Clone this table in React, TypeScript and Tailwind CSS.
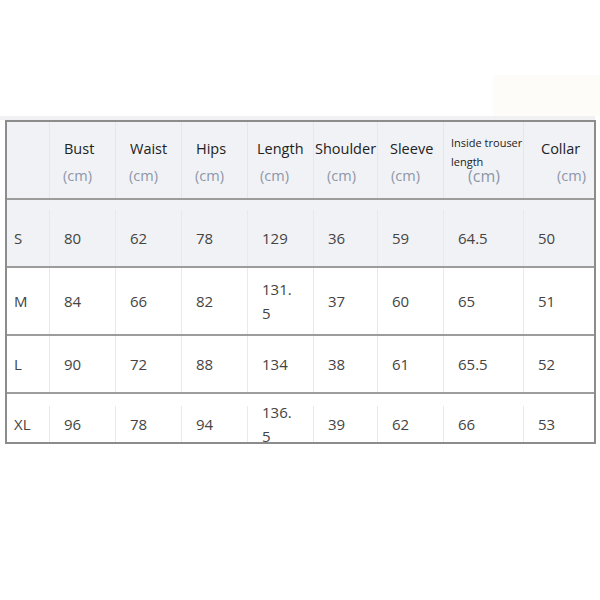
import React from "react";

const cols = "grid grid-cols-[42px_66px_66px_66px_66px_64px_66px_80px_71px]";

type Head = { label: string; pl: string; cmPl: string };

const heads: Head[] = [
  { label: "Bust", pl: "pl-[14px]", cmPl: "pl-[13px]" },
  { label: "Waist", pl: "pl-[14px]", cmPl: "pl-[13px]" },
  { label: "Hips", pl: "pl-[14px]", cmPl: "pl-[13px]" },
  { label: "Length", pl: "pl-[9px]", cmPl: "pl-[12px]" },
  { label: "Shoulder", pl: "pl-[1px]", cmPl: "pl-[13px]" },
  { label: "Sleeve", pl: "pl-[12px]", cmPl: "pl-[13px]" },
];

const rows = [
  { size: "S", vals: ["80", "62", "78", "129", "36", "59", "64.5", "50"], h: "h-[68px] pt-[10px] grid-rows-[56px] bg-[#f1f2f5]" },
  { size: "M", vals: ["84", "66", "82", "131.|5", "37", "60", "65", "51"], h: "h-[68px] grid-rows-[66px]" },
  { size: "L", vals: ["90", "72", "88", "134", "38", "61", "65.5", "52"], h: "h-[58px] grid-rows-[56px]" },
  { size: "XL", vals: ["96", "78", "94", "136.|5", "39", "62", "66", "53"], h: "h-[48px] pt-[12px] grid-rows-[36px]" },
];

const Cell = ({ text }: { text: string }) => {
  const parts = text.split("|");
  return (
    <div className="flex items-center border-l border-[#e8e9ee] pl-[14px] min-h-0">
      <div className="leading-[24px]">
        {parts.map((p, i) => (
          <div key={i}>{p}</div>
        ))}
      </div>
    </div>
  );
};

export default function App() {
  return (
    <div
      className="w-[600px] h-[600px] bg-white pt-[75px]"
      style={{ fontFamily: '"Open Sans", "Noto Sans", sans-serif' }}
    >
      <div className="flex justify-end">
        <div className="w-[107px] h-[41px] bg-[#fdfcf9]" />
      </div>
      <div className="w-[595px] h-[4px] bg-[#f1f1f4]" />

      <div className="ml-[5px] w-[591px] border-2 border-[#8c8c8c]">
        {/* header */}
        <div className={`${cols} h-[78px] box-border bg-[#f1f2f5] border-b-2 border-[#9c9c9c] text-[14.5px]`}>
          <div />
          {heads.map((h) => (
            <div key={h.label} className="border-l border-[#e6e7ec] pt-[13px] leading-[27px]">
              <div className={`${h.pl} text-[#222] whitespace-nowrap`}>{h.label}</div>
              <div className={`${h.cmPl} text-[#8e96aa]`}>(cm)</div>
            </div>
          ))}
          <div className="border-l border-[#e6e7ec] pt-[11px]">
            <div className="pl-[7px] text-[11px] leading-[19px] text-[#222] whitespace-nowrap">
              Inside trouser
            </div>
            <div className="pl-[7px] text-[11px] leading-[19px] text-[#222]">length</div>
            <div className="pl-[24px] -mt-[8px] text-[16px] leading-[27px] text-[#8e96aa]">(cm)</div>
          </div>
          <div className="border-l border-[#e6e7ec] pt-[13px] leading-[27px]">
            <div className="pl-[17px] text-[#222]">Collar</div>
            <div className="pl-[33px] text-[#8e96aa] whitespace-nowrap">(cm)</div>
          </div>
        </div>

        {rows.map((r, i) => (
          <div
            key={r.size}
            className={`${cols} ${r.h} box-border text-[15px] text-[#444] ${
              i < rows.length - 1 ? "border-b-2 border-[#9c9c9c]" : ""
            }`}
          >
            <div className="flex items-center pl-[7px] leading-[24px]">{r.size}</div>
            {r.vals.map((v, j) => (
              <Cell key={j} text={v} />
            ))}
          </div>
        ))}
      </div>
    </div>
  );
}
